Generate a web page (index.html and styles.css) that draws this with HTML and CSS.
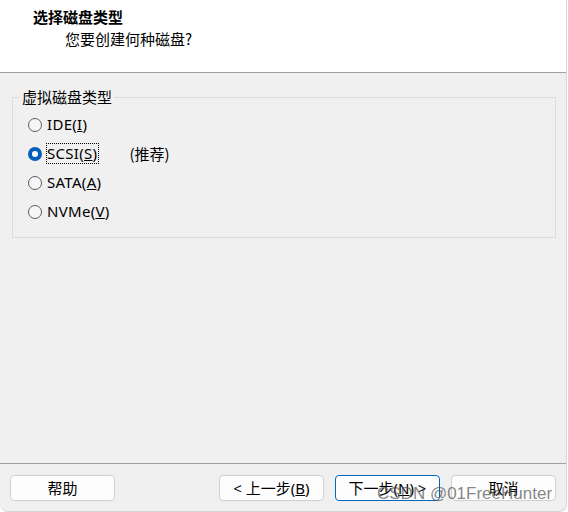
FILE: index.html
```html
<!DOCTYPE html>
<html lang="zh-CN">
<head>
<meta charset="utf-8">
<link rel="stylesheet" href="styles.css">
</head>
<body>
<div class="window">
  <header class="head">
    <div class="title">选择磁盘类型</div>
    <div class="subtitle">您要创建何种磁盘?</div>
  </header>
  <main class="content">
    <fieldset class="group">
      <legend class="legend">虚拟磁盘类型</legend>
      <div class="row"><span class="radio"></span><span class="label">IDE(<u>I</u>)</span></div>
      <div class="row"><span class="radio checked"></span><span class="label focus">SCSI(<u>S</u>)</span><span class="note">(推荐)</span></div>
      <div class="row"><span class="radio"></span><span class="label">SATA(<u>A</u>)</span></div>
      <div class="row"><span class="radio"></span><span class="label">NVMe(<u>V</u>)</span></div>
    </fieldset>
  </main>
  <footer class="foot">
    <button class="btn">帮助</button>
    <div class="spacer"></div>
    <button class="btn">&lt; 上一步(<u>B</u>)</button>
    <button class="btn primary">下一步(<u>N</u>) &gt;</button>
    <button class="btn">取消</button>
  </footer>
  <div class="watermark">CSDN @01FreeHunter</div>
</div>
</body>
</html>
```

FILE: styles.css
```css
* { box-sizing: border-box; }
html, body { margin: 0; padding: 0; }
body {
  width: 568px;
  height: 512px;
  overflow: hidden;
  background: #ffffff;
  font-family: "Noto Sans", "Noto Sans CJK SC", sans-serif;
  font-size: 15px;
  color: #000;
}
.window {
  position: relative;
  width: 567px;
  height: 512px;
  display: flex;
  flex-direction: column;
  background: #f0f0f0;
  border-right: 1px solid #d6d6d6;
  border-radius: 0 0 8px 8px;
  border-bottom: 1px solid #d6d6d6;
}
.head {
  height: 73px;
  background: #fff;
  border-bottom: 1px solid #a0a0a0;
  padding: 7px 0 0 33px;
}
.title {
  font-family: "Noto Sans CJK SC", sans-serif;
  font-weight: 700;
  font-size: 15px;
  line-height: 20px;
}
.subtitle {
  font-family: "Noto Sans CJK SC", sans-serif;
  margin-left: 32px;
  margin-top: 2px;
  line-height: 20px;
}
.content {
  flex: 1;
  padding: 14px 0 0 12px;
}
.group {
  margin: 0;
  width: 544px;
  border: 1px solid #dcdcdc;
  padding: 3px 0 11px 15px;
}
.legend {
  font-family: "Noto Sans CJK SC", sans-serif;
  margin-left: -8px;
  padding: 0 2px;
  line-height: 20px;
}
.row {
  height: 29px;
  display: flex;
  align-items: center;
}
.radio {
  width: 14px;
  height: 14px;
  border: 1px solid #5c5c5c;
  border-radius: 50%;
  background: #f6f6f6;
  margin-right: 4px;
  flex: none;
}
.radio.checked {
  border: 4px solid #005fb8;
  background: #fff;
}
.label {
  padding: 0 1px 1px 0;
  line-height: 18px;
  border: 1px dotted transparent;
  letter-spacing: 0.3px;
}
.label.focus { border-color: #000; }
.note {
  margin-left: 30px;
  font-family: "Noto Sans CJK SC", sans-serif;
}
.foot {
  height: 48px;
  border-top: 1px solid #a0a0a0;
  display: flex;
  align-items: flex-start;
  padding: 11px 10px 0 10px;
  gap: 11px;
}
.spacer { flex: 1; }
.btn {
  width: 105px;
  height: 26px;
  background: #fdfdfd;
  border: 1px solid #d0d0d0;
  border-radius: 4px;
  font-family: "Noto Sans", "Noto Sans CJK SC", sans-serif;
  font-size: 15px;
  line-height: 20px;
  color: #000;
  padding: 0;
}
.btn.primary { border-color: #0067c0; }
.watermark {
  position: absolute;
  left: 377px;
  top: 484px;
  font-family: "Liberation Sans", sans-serif;
  font-size: 17px;
  color: rgba(80, 80, 80, 0.7);
  white-space: nowrap;
}
```
